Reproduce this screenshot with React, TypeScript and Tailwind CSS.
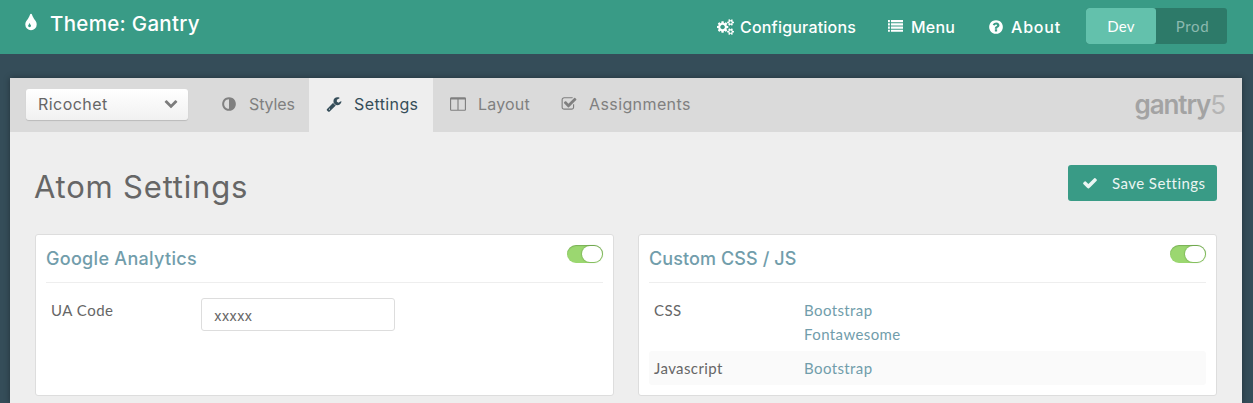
import type { ReactNode } from "react";

const ICONS = {
  tint: "M896 1152q0-36-20-69-1-1-15.5-22.5t-25.5-38-25-44-21-50.5q-4-16-21-16t-21 16q-7 23-21 50.5t-25 44-25.5 38-15.5 22.5q-20 33-20 69 0 53 37.5 90.5t90.5 37.5 90.5-37.5 37.5-90.5zm512-128q0 212-150 362t-362 150-362-150-150-362q0-145 81-275 6-9 62.5-90.5t101-151 99.5-178 83-201.5q9-30 34-47t51-17 51.5 17 33.5 47q28 93 83 201.5t99.5 178 101 151 62.5 90.5q81 127 81 275z",
  cogs: "M832 896q0-106-75-181t-181-75-181 75-75 181 75 181 181 75 181-75 75-181zm768 512q0-52-38-90t-90-38-90 38-38 90q0 53 37.5 90.5t90.5 37.5 90.5-37.5 37.5-90.5zm0-1024q0-52-38-90t-90-38-90 38-38 90q0 53 37.5 90.5t90.5 37.5 90.5-37.5 37.5-90.5zm-384 421v185q0 10-7 19.5t-16 10.5l-155 24q-11 35-32 76 34 48 90 115 7 11 7 20 0 12-7 19-23 30-82.5 89.5t-78.5 59.5q-11 0-21-7l-115-90q-37 19-77 31-11 108-23 155-7 24-30 24h-186q-11 0-20-7.5t-10-17.5l-23-153q-34-10-75-31l-118 89q-7 7-20 7-11 0-21-8-144-133-144-160 0-9 7-19 10-14 41-53t47-61q-23-44-35-82l-152-24q-10-1-17-9.5t-7-19.5v-185q0-10 7-19.5t16-10.5l155-24q11-35 32-76-34-48-90-115-7-11-7-20 0-12 7-20 22-30 82-89t79-59q11 0 21 7l115 90q34-18 77-32 11-108 23-154 7-24 30-24h186q11 0 20 7.5t10 17.5l23 153q34 10 75 31l118-89q8-7 20-7 11 0 21 8 144 133 144 160 0 8-7 19-12 16-42 54t-45 60q23 48 34 82l152 23q10 2 17 10.5t7 19.5zm640 533v140q0 16-149 31-12 27-30 52 51 113 51 138 0 4-4 7-122 71-124 71-8 0-46-47t-52-68q-20 2-30 2t-30-2q-14 21-52 68t-46 47q-2 0-124-71-4-3-4-7 0-25 51-138-18-25-30-52-149-15-149-31v-140q0-16 149-31 13-29 30-52-51-113-51-138 0-4 4-7 4-2 35-20t59-34 30-16q8 0 46 46.5t52 67.5q20-2 30-2t30 2q51-71 92-112l6-2q4 0 124 70 4 3 4 7 0 25-51 138 17 23 30 52 149 15 149 31zm0-1024v140q0 16-149 31-12 27-30 52 51 113 51 138 0 4-4 7-122 71-124 71-8 0-46-47t-52-68q-20 2-30 2t-30-2q-14 21-52 68t-46 47q-2 0-124-71-4-3-4-7 0-25 51-138-18-25-30-52-149-15-149-31v-140q0-16 149-31 13-29 30-52-51-113-51-138 0-4 4-7 4-2 35-20t59-34 30-16q8 0 46 46.5t52 67.5q20-2 30-2t30 2q51-71 92-112l6-2q4 0 124 70 4 3 4 7 0 25-51 138 17 23 30 52 149 15 149 31z",
  list: "M0 1280h224v256h-224zM0 896h224v256h-224zM0 512h224v256h-224zM0 128h224v256h-224zM352 1280h1440v256h-1440zM352 896h1440v256h-1440zM352 512h1440v256h-1440zM352 128h1440v256h-1440z",
  question:
    "M1024 1376v-192q0-14-9-23t-23-9h-192q-14 0-23 9t-9 23v192q0 14 9 23t23 9h192q14 0 23-9t9-23zm256-672q0-88-55.5-163t-138.5-116-170-41q-243 0-371 213-15 24 8 42l132 100q7 6 19 6 16 0 25-12 53-68 86-92 34-24 86-24 48 0 85.5 26t37.5 59q0 38-20 61t-68 45q-63 28-115.5 86.5t-52.5 125.5v36q0 14 9 23t23 9h192q14 0 23-9t9-23q0-19 21.5-49.5t54.5-49.5q32-18 49-28.5t46-35 44.5-48 28-60.5 12.5-81zm384 192q0 209-103 385.5t-279.5 279.5-385.5 103-385.5-103-279.5-279.5-103-385.5 103-385.5 279.5-279.5 385.5-103 385.5 103 279.5 279.5 103 385.5z",
  adjust:
    "M896 1440v-1088q-148 0-273 73t-198 198-73 273 73 273 198 198 273 73zm768-544q0 209-103 385.5t-279.5 279.5-385.5 103-385.5-103-279.5-279.5-103-385.5 103-385.5 279.5-279.5 385.5-103 385.5 103 279.5 279.5 103 385.5z",
  wrench:
    "M448 1472q0-26-19-45t-45-19-45 19-19 45 19 45 45 19 45-19 19-45zm644-420l-682 682q-37 37-90 37-52 0-91-37l-106-108q-38-36-38-90 0-53 38-91l681-681q39 98 114.5 173.5t173.5 114.5zm634-435q0 39-23 106-47 134-164.5 217.5t-258.5 83.5q-185 0-316.5-131.5t-131.5-316.5 131.5-316.5 316.5-131.5q58 0 121.5 16.5t107.5 46.5q16 11 16 28t-16 28l-293 169v224l193 107q5-3 79-48.5t135.5-81 70.5-35.5q15 0 23.5 10t8.5 25z",
  columns:
    "M160 1536h672v-1152h-704v1120q0 13 9.5 22.5t22.5 9.5zm1504-32v-1120h-704v1152h672q13 0 22.5-9.5t9.5-22.5zm128-1216v1216q0 66-47 113t-113 47h-1472q-66 0-113-47t-47-113v-1216q0-66 47-113t113-47h1472q66 0 113 47t47 113z",
  checkSquare:
    "M1472 930v318q0 119-84.5 203.5t-203.5 84.5h-832q-119 0-203.5-84.5t-84.5-203.5v-832q0-119 84.5-203.5t203.5-84.5h832q63 0 117 25 15 7 18 23 3 17-9 29l-49 49q-10 10-23 10-3 0-9-2-23-6-45-6h-832q-66 0-113 47t-47 113v832q0 66 47 113t113 47h832q66 0 113-47t47-113v-254q0-13 9-22l64-64q10-10 23-10 6 0 12 3 20 8 20 29zm231-489l-814 814q-24 24-57 24t-57-24l-430-430q-24-24-24-57t24-57l110-110q24-24 57-24t57 24l263 263 647-647q24-24 57-24t57 24l110 110q24 24 24 57t-24 57z",
  chevronDown:
    "M1683 808l-742 741q-19 19-45 19t-45-19l-742-741q-19-19-19-45.5t19-45.5l166-165q19-19 45-19t45 19l531 531 531-531q19-19 45-19t45 19l166 165q19 19 19 45.5t-19 45.5z",
  check:
    "M1671 566q0 40-28 68l-724 724-136 136q-28 28-68 28t-68-28l-136-136-362-362q-28-28-28-68t28-68l136-136q28-28 68-28t68 28l294 295 656-657q28-28 68-28t68 28l136 136q28 28 28 68z",
};

function Icon({ name, className, viewBox = "0 0 1792 1792" }: { name: keyof typeof ICONS; className: string; viewBox?: string }) {
  return (
    <svg viewBox={viewBox} className={`shrink-0 fill-current ${className}`} aria-hidden="true">
      <path d={ICONS[name]} />
    </svg>
  );
}

function Toggle() {
  return (
    <span className="flex h-[18px] w-9 shrink-0 justify-end rounded-full bg-[#9bd770] p-px shadow-[inset_0_1px_1px_rgba(60,110,40,0.35)]">
      <span className="h-4 w-[20px] rounded-full bg-white shadow-[0_0_1px_1px_rgba(90,140,60,0.35)]" />
    </span>
  );
}

function Card({ title, children }: { title: ReactNode; children: ReactNode }) {
  return (
    <section className="h-[162px] w-[579px] rounded-[3px] border border-[#dddddd] bg-white px-[10px]">
      <div className="flex h-12 items-start justify-between border-b border-[#eeeeee] pt-[10px]">
        {title}
        <Toggle />
      </div>
      {children}
    </section>
  );
}

export default function App() {
  return (
    <div className="flex h-[403px] w-[1253px] flex-col overflow-hidden bg-[#354d59] font-['Lato',sans-serif] text-[#666666]">
      <header className="flex h-[54px] shrink-0 bg-[#399b86] font-['Inter',sans-serif] text-white">
        <div className="flex h-12 w-[716px] items-center pl-[21px]">
          <Icon name="tint" className="mt-[-2px] mr-[9px] size-5" />
          <h1 className="text-[20.5px] leading-none font-medium tracking-[0.3px] whitespace-nowrap">Theme: Gantry</h1>
        </div>
        <nav className="flex h-[53px] items-center text-[16px] leading-none font-medium tracking-[0.2px]">
          <a className="flex w-[171px] items-center">
            <Icon name="cogs" viewBox="0 0 1920 1792" className="mr-[5px] ml-px h-4 w-[18px]" />
            <span className="whitespace-nowrap">Configurations</span>
          </a>
          <a className="flex w-[101px] items-center">
            <Icon name="list" className="mr-2 ml-px size-[15px]" />
            <span>Menu</span>
          </a>
          <a className="flex w-[98px] items-center">
            <Icon name="question" className="mr-[7px] size-4" />
            <span className="tracking-[0.8px]">About</span>
          </a>
        </nav>
        <div className="mt-2 flex h-9 w-[141px] overflow-hidden rounded-[3px] bg-[#2d7a69] font-['Lato',sans-serif] text-[15px] tracking-[0.3px]">
          <span className="flex w-[70px] items-center justify-center rounded-[3px] bg-[#63c1ac] pt-px">Dev</span>
          <span className="flex flex-1 items-center justify-center pt-px pl-[2px] tracking-[0.6px] text-[#8bb9af]">Prod</span>
        </div>
      </header>

      <main className="mt-6 ml-[10px] flex w-[1232px] flex-1 flex-col bg-[#eeeeee] shadow-[0_0_6px_rgba(0,0,0,0.35)]">
        <div className="flex h-[54px] shrink-0 bg-[#dadada] font-['Inter',sans-serif] text-[16px] leading-none text-[#808080]">
          <div className="mt-[11px] ml-4 flex h-[31px] w-[162px] items-center justify-between rounded-[3px] bg-linear-to-b from-white to-[#f1f1f1] pr-[10px] pl-3 text-[#666666] shadow-[0_1px_1px_rgba(0,0,0,0.15)]">
            <span className="mt-[-2px] tracking-[0.45px]">Ricochet</span>
            <Icon name="chevronDown" className="mt-[-4px] size-[14px] text-[#7c7c7c]" />
          </div>
          <a className="ml-[33px] flex w-[88px] items-center pb-[2px]">
            <Icon name="adjust" className="mr-3 size-4" />
            <span className="tracking-[-0.1px]">Styles</span>
          </a>
          <a className="flex w-[124px] items-center bg-[#eeeeee] pb-[2px] pl-[17px] text-[#354d59]">
            <Icon name="wrench" className="mr-3 size-4" />
            <span className="tracking-[0.4px]">Settings</span>
          </a>
          <a className="flex w-[111px] items-center pb-[2px] pl-[17px]">
            <Icon name="columns" className="mr-3 size-[16px]" />
            <span className="tracking-[0.2px]">Layout</span>
          </a>
          <a className="flex flex-1 items-center pb-[2px] pl-[17px]">
            <Icon name="checkSquare" className="mr-3 size-4" />
            <span className="tracking-[0.4px]">Assignments</span>
          </a>
          <span className="mt-[11px] mr-[17px] text-[26px] leading-8 font-semibold tracking-[-1.1px] text-[#a3a3a3]">
            gantry<span className="font-normal text-[#b5b5b5]">5</span>
          </span>
        </div>

        <div className="flex h-[102px] shrink-0 items-start justify-between px-[25px]">
          <h1 className="mt-[37px] ml-[-1px] font-['Inter',sans-serif] text-[31px] leading-9 tracking-[0.8px] whitespace-nowrap">Atom Settings</h1>
          <button className="mt-[33px] flex h-9 w-[149px] items-center rounded-[3px] bg-[#399b86] pl-[14px] text-[15px] tracking-[0.45px] text-[#ebf5f3]">
            <Icon name="check" className="mr-[14px] size-4" />
            <span className="whitespace-nowrap">Save Settings</span>
          </button>
        </div>

        <div className="flex justify-between px-[25px]">
          <Card
            title={
              <h2 className="mt-px font-['Inter',sans-serif] text-[18px] leading-[26px] font-medium tracking-[0.3px] whitespace-nowrap text-[#719dab]">
                Google Analytics
              </h2>
            }
          >
            <div className="flex pt-[15px] pl-[5px] text-[15px]">
              <label htmlFor="ua" className="w-[150px] leading-6 tracking-[0.5px]">UA Code</label>
              <input
                id="ua"
                defaultValue="xxxxx"
                className="h-[33px] w-[194px] rounded-[3px] border border-[#dddddd] bg-white px-3 pt-[2px] font-['Inter',sans-serif] text-[14px] outline-none"
              />
            </div>
          </Card>
          <Card
            title={
              <h2 className="mt-px font-['Inter',sans-serif] text-[18px] leading-[26px] font-medium tracking-[0.1px] whitespace-nowrap text-[#719dab]">
                Custom CSS / JS
              </h2>
            }
          >
            <div className="flex h-[68px] pt-[15px] pl-[5px] text-[15px] leading-6 tracking-[0.4px]">
              <span className="w-[150px]">CSS</span>
              <span className="flex flex-col text-[#719dab]">
                <a>Bootstrap</a>
                <a>Fontawesome</a>
              </span>
            </div>
            <div className="flex h-[34px] items-center rounded-[3px] bg-[#fafafa] pl-[5px] text-[15px] leading-6 tracking-[0.4px]">
              <span className="w-[150px]">Javascript</span>
              <a className="text-[#719dab]">Bootstrap</a>
            </div>
          </Card>
        </div>
      </main>
    </div>
  );
}
